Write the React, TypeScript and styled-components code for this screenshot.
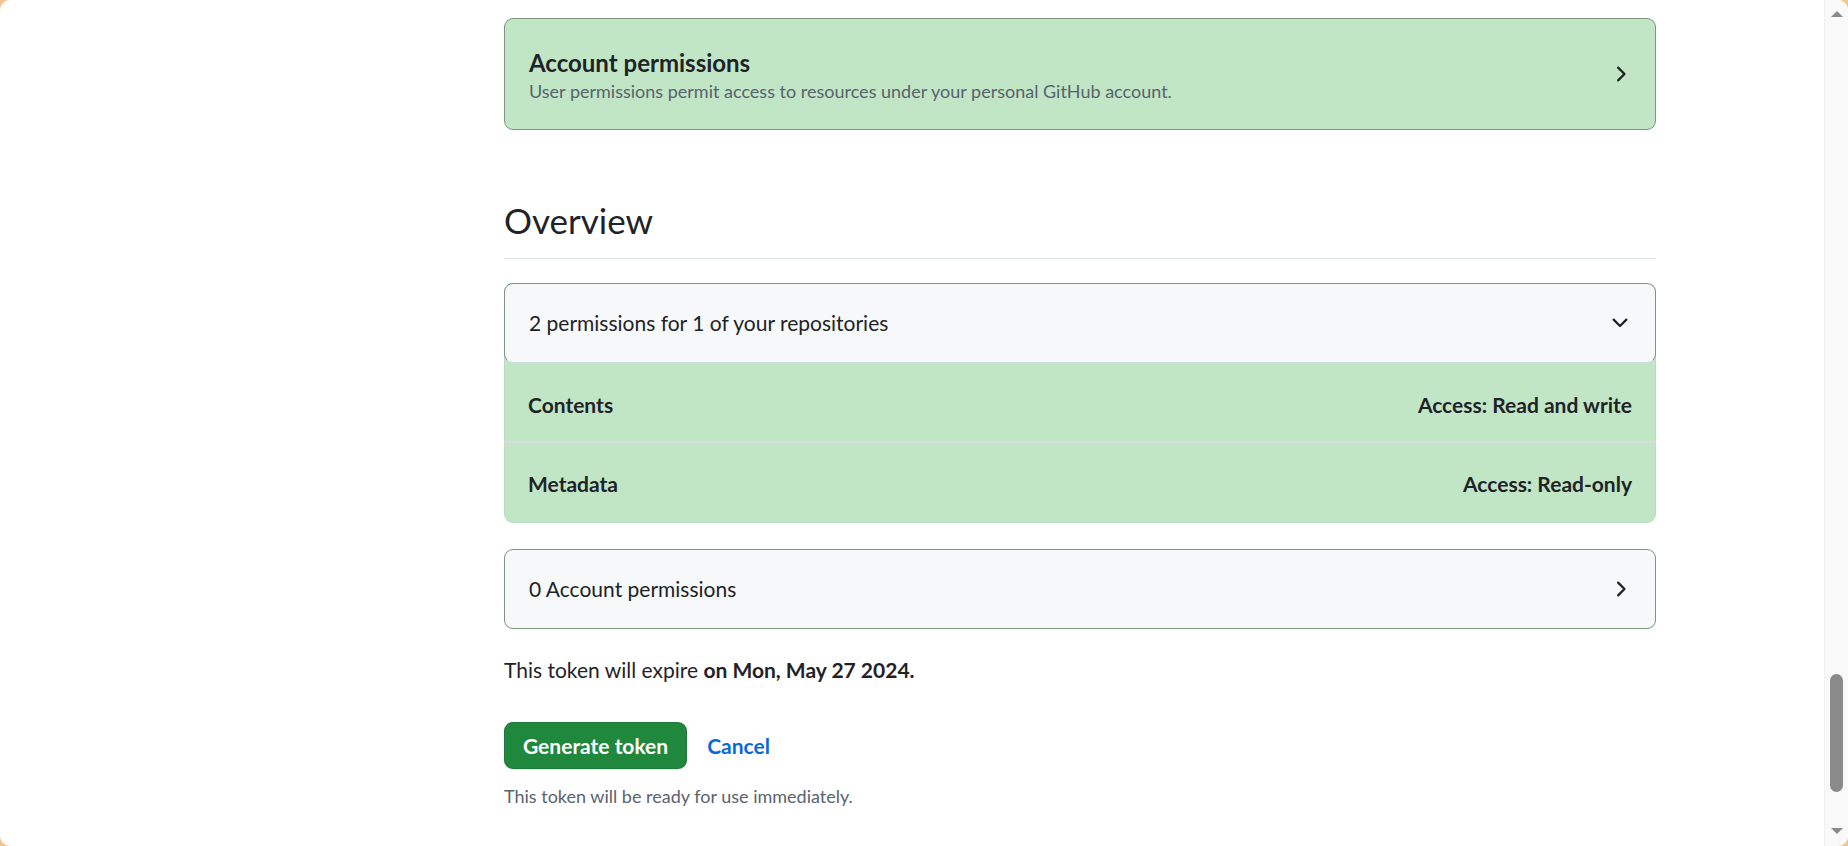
import styled, { createGlobalStyle } from 'styled-components'

const GlobalStyle = createGlobalStyle`
  html, body {
    margin: 0;
    padding: 0;
    background: #f2c48f;
  }
  body {
    font-family: Lato, "Open Sans", sans-serif;
    color: #1f2328;
  }
`

const ChevronRight = () => (
  <svg width="24" height="24" viewBox="0 0 16 16" fill="currentColor">
    <path d="M6.22 3.22a.75.75 0 0 1 1.06 0l4.25 4.25a.75.75 0 0 1 0 1.06l-4.25 4.25a.751.751 0 0 1-1.042-.018.751.751 0 0 1-.018-1.042L9.94 8 6.22 4.28a.75.75 0 0 1 0-1.06Z" />
  </svg>
)

const ChevronDown = () => (
  <svg width="24" height="24" viewBox="0 0 16 16" fill="currentColor">
    <path d="M12.78 5.22a.749.749 0 0 1 0 1.06l-4.25 4.25a.749.749 0 0 1-1.06 0L3.22 6.28a.749.749 0 1 1 1.06-1.06L8 8.94l3.72-3.72a.749.749 0 0 1 1.06 0Z" />
  </svg>
)

const permissions = [
  { name: 'Contents', access: 'Access: Read and write' },
  { name: 'Metadata', access: 'Access: Read-only' },
]

export default function App() {
  return (
    <>
      <GlobalStyle />
      <Frame>
        <Page>
          <Sidebar />
          <Main>
            <HighlightCard>
              <div>
                <CardTitle>Account permissions</CardTitle>
                <CardText>
                  User permissions permit access to resources under your personal GitHub account.
                </CardText>
              </div>
              <ChevronRight />
            </HighlightCard>

            <Subhead>Overview</Subhead>

            <PermissionBox>
              <BoxHeader $open>
                <span>2 permissions for 1 of your repositories</span>
                <ChevronDown />
              </BoxHeader>
              {permissions.map((p, i) => (
                <PermissionRow key={p.name} $first={i === 0}>
                  <span>{p.name}</span>
                  <span>{p.access}</span>
                </PermissionRow>
              ))}
            </PermissionBox>

            <AccountBox>
              <BoxHeader>
                <span>0 Account permissions</span>
                <ChevronRight />
              </BoxHeader>
            </AccountBox>

            <Expire>
              This token will expire <strong>on Mon, May 27 2024.</strong>
            </Expire>

            <Actions>
              <PrimaryButton type="button">Generate token</PrimaryButton>
              <CancelLink href="#">Cancel</CancelLink>
            </Actions>

            <Note>This token will be ready for use immediately.</Note>
          </Main>
        </Page>

        <Scrollbar>
          <ArrowUp />
          <Track>
            <Thumb />
          </Track>
          <ArrowDown />
        </Scrollbar>
      </Frame>
    </>
  )
}

const Frame = styled.div`
  display: flex;
  height: 846px;
  background: #ffffff;
  border-radius: 10px;
  overflow: hidden;
`

const Page = styled.div`
  flex: 1;
  display: grid;
  grid-template-columns: 504px 1152px;
  padding-top: 18px;
  overflow: hidden;
`

const Sidebar = styled.aside``

const Main = styled.main`
  display: flex;
  flex-direction: column;
`

const HighlightCard = styled.section`
  display: flex;
  align-items: center;
  justify-content: space-between;
  padding: 25.5px 23px 27.5px 24px;
  background: #c1e6c6;
  border: 1px solid #7b977e;
  border-radius: 9px;
  color: #1f2328;

  svg {
    margin-top: 2px;
  }
`

const CardTitle = styled.h3`
  margin: 0;
  font-size: 24px;
  line-height: 36px;
  font-weight: 700;
`

const CardText = styled.p`
  margin: 0;
  font-size: 18px;
  line-height: 21px;
  color: #59636e;
`

const Subhead = styled.h2`
  margin: 63px 0 0;
  padding-bottom: 11px;
  font-size: 35px;
  line-height: 54px;
  font-weight: 400;
  border-bottom: 1px solid #d8dee4;
`

const PermissionBox = styled.div`
  margin-top: 24px;
  background: #c1e6c6;
  border-radius: 9px;
  box-shadow: inset 0 0 0 1px rgba(0, 0, 0, 0.04);
`

const AccountBox = styled.div`
  margin-top: 26px;
`

const BoxHeader = styled.div<{ $open?: boolean }>`
  display: flex;
  align-items: center;
  justify-content: space-between;
  padding: 23px 23px 23px 24px;
  font-size: 21px;
  line-height: 32px;
  background: #f6f8fa;
  border: 1px solid #7b977e;
  border-bottom-color: ${(p) => (p.$open ? '#d1d9e0' : '#7b977e')};
  border-radius: 9px;
`

const PermissionRow = styled.div<{ $first?: boolean }>`
  display: flex;
  justify-content: space-between;
  padding: ${(p) => (p.$first ? '26px 24px 21px' : '25px 24px 23px')};
  font-size: 21px;
  line-height: 32px;
  font-weight: 700;
  border-top: ${(p) => (p.$first ? 'none' : '1px solid #d9dbe2')};
`

const Expire = styled.p`
  margin: 25px 0 0;
  font-size: 21px;
  line-height: 32px;

  strong {
    font-weight: 700;
  }
`

const Actions = styled.div`
  display: flex;
  align-items: center;
  gap: 20px;
  margin-top: 36px;
`

const PrimaryButton = styled.button`
  height: 47px;
  padding: 0 18px;
  font-family: inherit;
  font-size: 21px;
  font-weight: 700;
  color: #ffffff;
  background: #1f883d;
  border: 1px solid rgba(31, 35, 40, 0.15);
  border-radius: 9px;
  box-shadow: 0 1px 0 rgba(31, 35, 40, 0.1);
  cursor: pointer;
`

const CancelLink = styled.a`
  font-size: 21px;
  font-weight: 700;
  color: #0969da;
  text-decoration: none;
`

const Note = styled.p`
  margin: 14px 0 0;
  font-size: 18px;
  line-height: 27px;
  color: #59636e;
`

const Scrollbar = styled.div`
  width: 23px;
  display: flex;
  flex-direction: column;
  align-items: center;
  background: #f9f9f9;
  border-left: 1px solid #f0f0f0;
`

const ArrowUp = styled.div`
  margin-top: 11px;
  width: 0;
  height: 0;
  border-left: 6px solid transparent;
  border-right: 6px solid transparent;
  border-bottom: 6px solid #8a8a8a;
`

const ArrowDown = styled.div`
  margin-bottom: 12px;
  width: 0;
  height: 0;
  border-left: 6px solid transparent;
  border-right: 6px solid transparent;
  border-top: 6px solid #8a8a8a;
`

const Track = styled.div`
  flex: 1;
  display: flex;
  flex-direction: column;
  justify-content: flex-end;
  padding-bottom: 36px;
`

const Thumb = styled.div`
  width: 13px;
  height: 118px;
  background: #8a8a8a;
  border-radius: 7px;
`
